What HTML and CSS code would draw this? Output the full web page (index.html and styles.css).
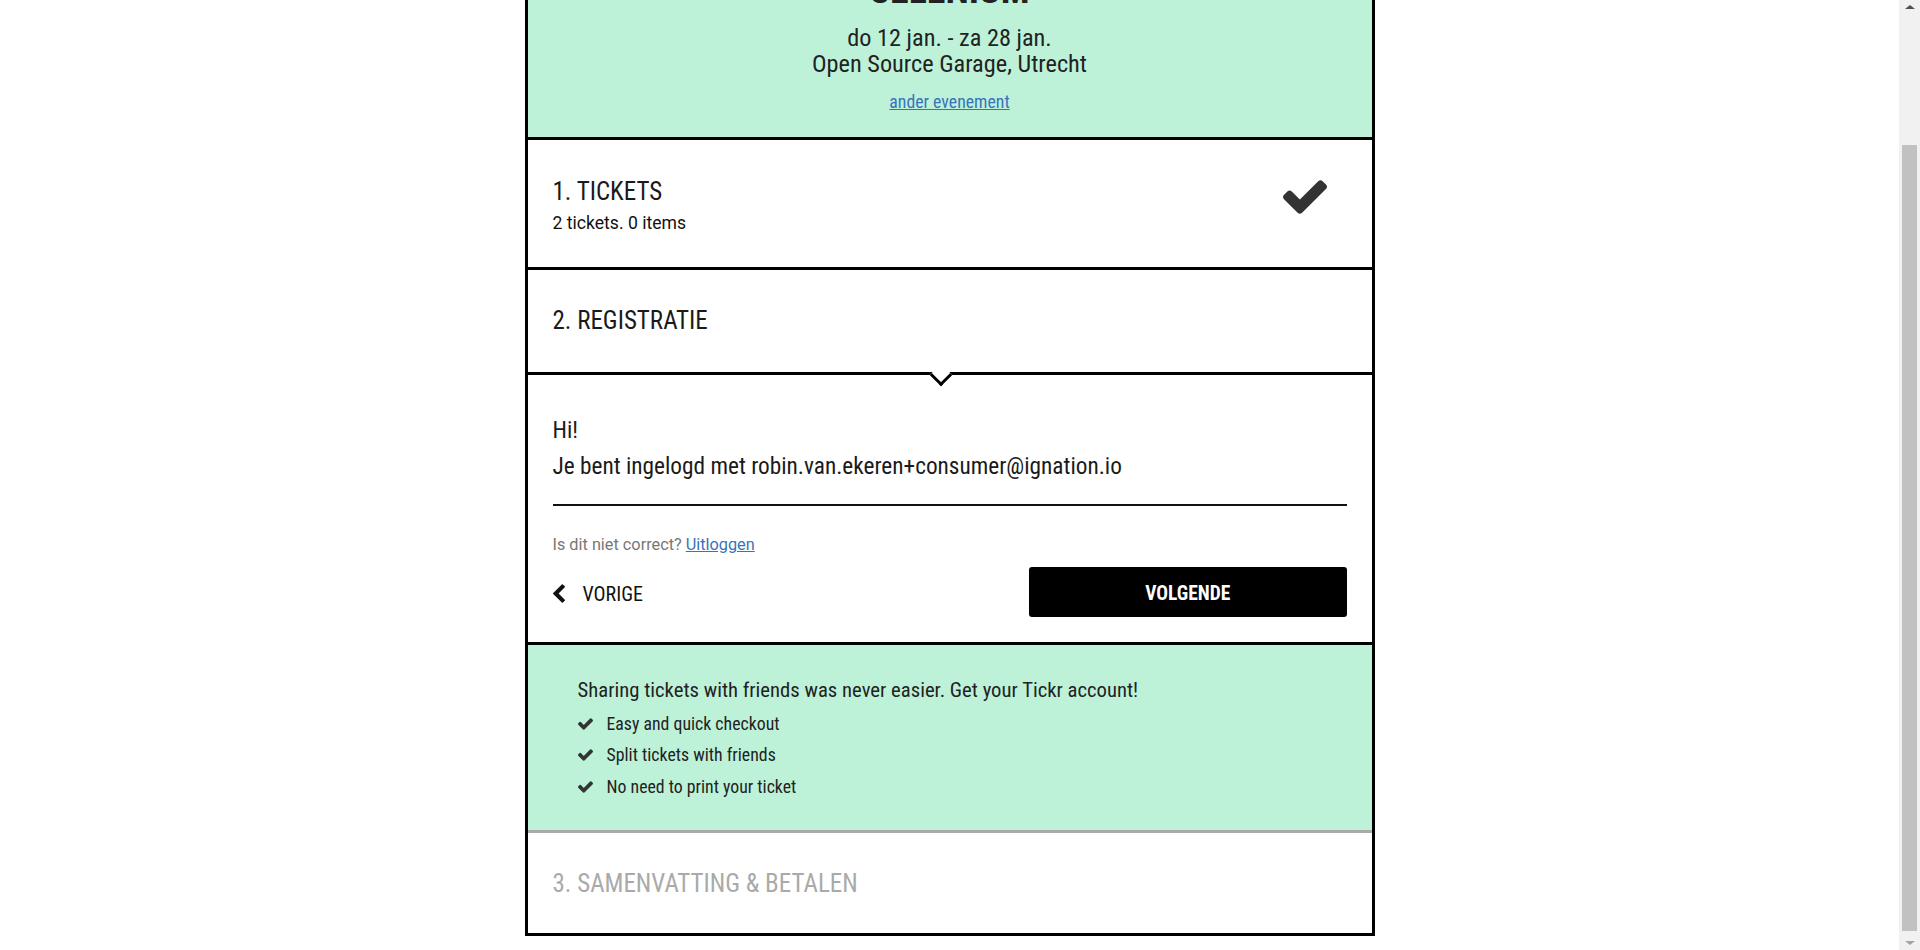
FILE: index.html
```html
<!DOCTYPE html>
<html lang="nl">
<head>
<meta charset="utf-8">
<title>Tickr - Registratie</title>
<link rel="stylesheet" href="styles.css">
</head>
<body>
<main class="page">
  <div class="checkout">
    <header class="event">
      <h1 class="event-title">SELENIUM</h1>
      <p class="event-date">do 12 jan. - za 28 jan.</p>
      <p class="event-venue">Open Source Garage, Utrecht</p>
      <p class="event-switch"><a href="#">ander evenement</a></p>
    </header>

    <section class="step step-done">
      <div class="step-text">
        <h2 class="step-title">1. TICKETS</h2>
        <p class="step-summary">2 tickets. 0 items</p>
      </div>
      <svg class="step-check" viewBox="121 334 1550 1188" aria-hidden="true"><path d="M1671 566q0 40-28 68l-724 724-136 136q-28 28-68 28t-68-28l-136-136-362-362q-28-28-28-68t28-68l136-136q28-28 68-28t68 28l294 295 656-657q28-28 68-28t68 28l136 136q28 28 28 68z"/></svg>
    </section>

    <section class="step step-head">
      <h2 class="step-title">2. REGISTRATIE</h2>
    </section>

    <section class="step-body">
      <p class="greeting">Hi!<br>Je bent ingelogd met robin.van.ekeren+consumer@ignation.io</p>
      <p class="logout">Is dit niet correct? <a href="#">Uitloggen</a></p>
      <div class="nav">
        <a class="prev" href="#">
          <svg class="prev-icon" viewBox="410 26 1036 1612" aria-hidden="true"><path d="M1427 301l-531 531 531 531q19 19 19 45t-19 45l-166 166q-19 19-45 19t-45-19l-742-742q-19-19-19-45t19-45l742-742q19-19 45-19t45 19l166 166q19 19 19 45t-19 45z"/></svg>
          <span>VORIGE</span>
        </a>
        <button class="next" type="button">VOLGENDE</button>
      </div>
    </section>

    <aside class="promo">
      <p class="promo-title">Sharing tickets with friends was never easier. Get your Tickr account!</p>
      <ul class="promo-list">
        <li><svg class="tick" viewBox="121 334 1550 1188" aria-hidden="true"><path d="M1671 566q0 40-28 68l-724 724-136 136q-28 28-68 28t-68-28l-136-136-362-362q-28-28-28-68t28-68l136-136q28-28 68-28t68 28l294 295 656-657q28-28 68-28t68 28l136 136q28 28 28 68z"/></svg><span>Easy and quick checkout</span></li>
        <li><svg class="tick" viewBox="121 334 1550 1188" aria-hidden="true"><path d="M1671 566q0 40-28 68l-724 724-136 136q-28 28-68 28t-68-28l-136-136-362-362q-28-28-28-68t28-68l136-136q28-28 68-28t68 28l294 295 656-657q28-28 68-28t68 28l136 136q28 28 28 68z"/></svg><span>Split tickets with friends</span></li>
        <li><svg class="tick" viewBox="121 334 1550 1188" aria-hidden="true"><path d="M1671 566q0 40-28 68l-724 724-136 136q-28 28-68 28t-68-28l-136-136-362-362q-28-28-28-68t28-68l136-136q28-28 68-28t68 28l294 295 656-657q28-28 68-28t68 28l136 136q28 28 28 68z"/></svg><span>No need to print your ticket</span></li>
      </ul>
    </aside>

    <section class="step step-disabled">
      <h2 class="step-title">3. SAMENVATTING &amp; BETALEN</h2>
    </section>
  </div>
</main>

<div class="fake-scrollbar" aria-hidden="true">
  <span class="sb-up"></span>
  <span class="sb-thumb"></span>
  <span class="sb-down"></span>
</div>
<script src="script.js"></script>
</body>
</html>
```

FILE: styles.css
```css
html {
  overflow-y: scroll;
}

body {
  margin: 0 21px 0 0;
  background: #fff;
  color: #222;
  font-family: "Roboto Condensed", Roboto, "Liberation Sans", sans-serif;
  font-stretch: 75%;
}

.page {
  padding: 20px 0 14px;
}

.checkout {
  width: 850px;
  margin: 0 auto;
  border: 3px solid #000;
  box-sizing: border-box;
}

/* Event header */
.event {
  background: #bdf2d9;
  text-align: center;
  padding: 100px 25px 25.3px;
}

.event-title {
  margin: 0;
  font-size: 38px;
  line-height: 40px;
  font-weight: bold;
  color: #222;
}

.event-date,
.event-venue {
  margin: 0;
  font-size: 24.3px;
  line-height: 26px;
  color: #222;
}

.event-date {
  margin-top: 14.7px;
}

.event-switch {
  margin: 15px 0 0;
  font-size: 17.8px;
  line-height: 20px;
}

.event-switch a,
.logout a {
  color: #3b73b9;
  text-decoration: underline;
}

/* Steps */
.step {
  border-top: 3px solid #000;
  padding: 0 25px;
}

.step-title {
  margin: 0;
  font-size: 25px;
  line-height: 28px;
  font-weight: normal;
  color: #1a1a1a;
}

.step-done {
  display: flex;
  justify-content: space-between;
  align-items: flex-start;
  padding: 38px 45px 33px 25px;
}

.step-summary {
  margin: 6px 0 0;
  font-family: Roboto, "Liberation Sans", sans-serif;
  font-stretch: 100%;
  font-size: 17.6px;
  line-height: 22px;
  color: #111;
}

.step-check {
  width: 44px;
  height: 34px;
  margin-top: 2px;
  fill: #333;
}

.step-head {
  padding: 37px 25px 37px;
}

.step-disabled {
  border-top-color: #aaa;
  padding: 37.5px 25px 34.5px;
}

.step-disabled .step-title {
  color: #aaa;
}

/* Active step body */
.step-body {
  position: relative;
  border-top: 3px solid #000;
  padding: 37px 25px 25px;
}

.step-body::before {
  content: "";
  position: absolute;
  top: -8px;
  left: 405px;
  width: 16px;
  height: 16px;
  box-sizing: border-box;
  background: #fff;
  border-right: 3px solid #000;
  border-bottom: 3px solid #000;
  transform: rotate(45deg);
}

.greeting {
  margin: 0;
  font-size: 23.3px;
  line-height: 36px;
  color: #1a1a1a;
  padding-bottom: 20px;
  border-bottom: 2px solid #111;
}

.logout {
  margin: 29.5px 0 0;
  font-family: Roboto, "Liberation Sans", sans-serif;
  font-stretch: 100%;
  font-size: 16.3px;
  line-height: 20px;
  color: #777;
}

.nav {
  display: flex;
  justify-content: space-between;
  align-items: center;
  margin-top: 11.5px;
}

.prev {
  display: flex;
  align-items: center;
  gap: 18px;
  padding-top: 4px;
  color: #111;
  text-decoration: none;
  font-size: 20px;
  line-height: 22px;
}

.prev-icon {
  width: 12px;
  height: 19px;
  fill: #111;
}

.next {
  width: 40%;
  height: 50px;
  padding: 4px 0 0;
  border: 0;
  border-radius: 3px;
  background: #000;
  color: #fff;
  font-family: "Roboto Condensed", Roboto, sans-serif;
  font-stretch: 75%;
  font-size: 19.5px;
  font-weight: bold;
  cursor: pointer;
}

/* Promo */
.promo {
  border-top: 3px solid #000;
  background: #bdf2d9;
  padding: 33px 25px 27.5px 50px;
}

.promo-title {
  margin: 0;
  font-size: 20.7px;
  line-height: 24px;
  color: #222;
}

.promo-list {
  list-style: none;
  margin: 6px 0 0;
  padding: 0;
}

.promo-list li {
  display: flex;
  align-items: center;
  gap: 14px;
  font-size: 17.8px;
  line-height: 31.5px;
  color: #222;
}

.tick {
  width: 15px;
  height: 12px;
  fill: #333;
}

/* Browser scrollbar as in the screenshot */
.fake-scrollbar {
  position: fixed;
  top: 0;
  right: 0;
  width: 21px;
  height: 100vh;
  background: #f1f1f1;
}

.sb-up,
.sb-down {
  position: absolute;
  left: 6px;
  width: 0;
  height: 0;
  border-left: 5px solid transparent;
  border-right: 5px solid transparent;
}

.sb-up {
  top: 5px;
  border-bottom: 4px solid #505050;
}

.sb-down {
  bottom: 5px;
  border-top: 4px solid #a3a3a3;
}

.sb-thumb {
  position: absolute;
  top: 145px;
  left: 3px;
  width: 15px;
  height: 786px;
  background: #c1c1c1;
}
```

FILE: script.js
```js
if ('scrollRestoration' in history) {
  history.scrollRestoration = 'manual';
}
function toBottom() {
  window.scrollTo(0, document.documentElement.scrollHeight);
}
toBottom();
window.addEventListener('load', toBottom);
```
